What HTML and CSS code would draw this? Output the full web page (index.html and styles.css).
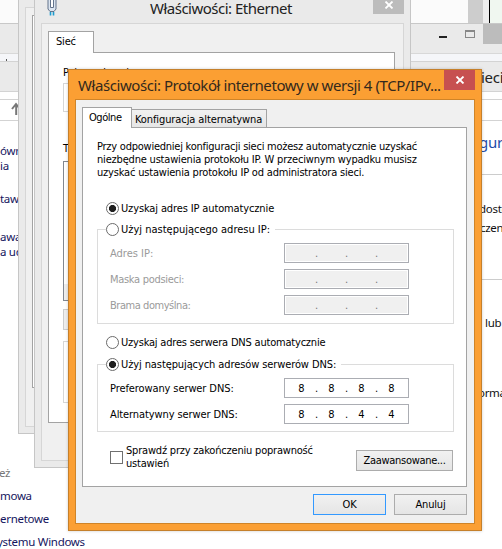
FILE: index.html
```html
<!DOCTYPE html>
<html lang="pl">
<head>
<meta charset="utf-8">
<title>Właściwości: Protokół internetowy w wersji 4</title>
<link rel="stylesheet" href="styles.css">
</head>
<body>
<div class="desktop">
  <div class="explorer">
    <div class="strip"><i class="scroll"></i><i class="edge"></i><i class="green"></i></div>
    <div class="caption"><i class="min"></i><i class="max"></i><i class="cls"></i></div>
    <div class="menu"></div>
    <div class="address"><span class="addr-text">ieci</span></div>
    <div class="gap-row"></div>
    <div class="search-row"></div>
    <i class="tick"></i>
    <svg class="up" viewBox="0 0 8 14"><path d="M1 7L5 2L9 7M5.2 2V13" fill="none" stroke="#777" stroke-width="2"/></svg>
    <span class="bit link b2">ówn</span><span class="bit link b3">ia</span><span class="bit link b4">taw</span>
    <span class="bit link b5">awa</span><span class="bit link b6">a ud</span>
    <span class="bit grey b7">eż</span><span class="bit link b8">mowa</span><span class="bit link b9">ernetowe</span><span class="bit link b10">ystemu Windows</span>
    <span class="bit head b11">gura</span><span class="bit b12">dostę</span><span class="bit b13">czeni</span><span class="bit b14">lub</span><span class="bit b15">orma</span>
    <i class="rule r1"></i><i class="rule r2"></i>
  </div>

  <div class="win back"><div class="client"><div class="page"></div></div></div>

  <div class="win ether">
    <div class="ether-title">
      <svg class="plug" viewBox="0 0 10 17"><path d="M1 0V9L3 11.5H7L9 9V0" fill="#dbe4ef" stroke="#63738b"/><path d="M3.5 0V7.5H6.5V0" fill="#fff" stroke="#63738b"/><path d="M3.5 12V15.5M6.5 12V15.5" stroke="#1d9dd0" stroke-width="1.6"/></svg>
      <span class="title t-ether">Właściwości: Ethernet</span>
      <span class="ether-close"><svg viewBox="0 0 10 8"><path d="M1.5 .5L8.5 7.5M8.5 .5L1.5 7.5" stroke="#fff" stroke-width="1.8"/></svg></span>
    </div>
    <div class="client">
      <div class="tab">Sieć</div>
      <div class="page">
        <span>Połącz używając:</span>
        <i class="box-a"></i>
        <span class="list-label">T</span>
        <i class="box-b"></i><i class="box-c"></i><i class="box-d"></i>
      </div>
    </div>
  </div>

  <div class="dialog">
    <div class="titlebar">
      <span class="title t-main">Właściwości: Protokół internetowy w wersji 4 (TCP/IPv...</span>
      <span class="close"><svg viewBox="0 0 10 8"><path d="M1.5 .5L8.5 7.5M8.5 .5L1.5 7.5" stroke="#fff" stroke-width="1.8"/></svg></span>
    </div>
    <div class="body">
      <div class="tabs"><div class="tab on"><span class="w-og">Ogólne</span></div><div class="tab off"><span class="w-alt">Konfiguracja alternatywna</span></div></div>
      <div class="panel">
        <p class="intro"><span class="w-i1">Przy odpowiedniej konfiguracji sieci możesz automatycznie uzyskać</span><br><span class="w-i2">niezbędne ustawienia protokołu IP. W przeciwnym wypadku musisz</span><br><span class="w-i3">uzyskać ustawienia protokołu IP od administratora sieci.</span></p>
        <div class="opt o1"><i class="radio sel"></i><span class="w-r1">Uzyskaj adres IP automatycznie</span></div>
        <fieldset class="g1">
          <legend class="opt"><i class="radio"></i><span class="w-r2">Użyj następującego adresu IP:</span></legend>
          <div class="row dis"><span class="w-l1">Adres IP:</span><div class="ip"><b></b><u>.</u><b></b><u>.</u><b></b><u>.</u><b></b></div></div>
          <div class="row dis"><span class="w-l2">Maska podsieci:</span><div class="ip"><b></b><u>.</u><b></b><u>.</u><b></b><u>.</u><b></b></div></div>
          <div class="row dis"><span class="w-l3">Brama domyślna:</span><div class="ip"><b></b><u>.</u><b></b><u>.</u><b></b><u>.</u><b></b></div></div>
        </fieldset>
        <div class="opt o3"><i class="radio"></i><span class="w-r3">Uzyskaj adres serwera DNS automatycznie</span></div>
        <fieldset class="g2">
          <legend class="opt"><i class="radio sel"></i><span class="w-r4">Użyj następujących adresów serwerów DNS:</span></legend>
          <div class="row"><span class="w-l4">Preferowany serwer DNS:</span><div class="ip"><b>8</b><u>.</u><b>8</b><u>.</u><b>8</b><u>.</u><b>8</b></div></div>
          <div class="row"><span class="w-l5">Alternatywny serwer DNS:</span><div class="ip"><b>8</b><u>.</u><b>8</b><u>.</u><b>4</b><u>.</u><b>4</b></div></div>
        </fieldset>
        <div class="bottom">
          <i class="check"></i>
          <span class="check-label"><span class="w-c1">Sprawdź przy zakończeniu poprawność</span><br><span class="w-c2">ustawień</span></span>
          <span class="btn adv"><span class="w-adv">Zaawansowane...</span></span>
        </div>
      </div>
      <div class="actions"><span class="btn ok">OK</span><span class="btn">Anuluj</span></div>
    </div>
  </div>
</div>
</body>
</html>
```
FILE: styles.css
```css
* { box-sizing: border-box; }
body { margin: 0; background: #fff; font: 11px/13px "DejaVu Sans Condensed", "Noto Sans", sans-serif; color: #000; letter-spacing: -0.2px; white-space: nowrap; }
i, b, u { font-style: normal; font-weight: normal; text-decoration: none; }
svg { display: block; }
.desktop { position: relative; width: 502px; height: 549px; overflow: hidden; }

/* explorer window in the background */
.explorer { height: 549px; background: #fff; }
.strip { height: 23px; background: #fbfbfb; display: flex; padding-left: 468px; }
.scroll { width: 15px; background: #cdcdcd; }
.edge { width: 7px; background: #eee; border-right: 1px solid #000; }
.green { flex: 1; background: #f0f7f0; }
.caption { height: 31px; background: #eaeaea; border-top: 1px solid #c8c8c8; border-bottom: 1px solid #d8d8d8; display: flex; padding-left: 439px; }
.min { width: 8px; height: 2px; margin-top: 12px; background: #222; }
.max { width: 10px; height: 8px; margin: 6px 8px 0 18px; border: 1px solid #888; border-top-width: 2px; }
.cls { flex: 1; height: 20px; background: #bcbcbc; }
.menu { height: 7px; background: #f5f6f9; }
.address { height: 31px; background: #eaeaea; border: solid #d3d3d3; border-width: 1px 0; padding: 6px 0 0 481px; }
.addr-text { font: 15px/18px "Noto Sans", sans-serif; color: #222; letter-spacing: -0.3px; }
.gap-row { height: 8px; border-bottom: 1px solid #d3d3d3; }
.search-row { height: 21px; border-bottom: 1px solid #d3d3d3; }
.bit { position: absolute; font: 11.5px/16px "Noto Sans", sans-serif; letter-spacing: -0.3px; color: #111; left: 0; }
.link { color: #15155e; }
.grey { color: #777; }
.up { position: absolute; left: 11px; top: 102px; width: 8px; height: 14px; }
.tick { position: absolute; left: 6px; top: 59px; width: 1px; height: 2px; background: #555; }
.b2 { top: 143px; }
.b3 { top: 158px; }
.b4 { top: 191px; }
.b5 { top: 229px; }
.b6 { top: 244px; }
.b7 { top: 465px; left: -1px; }
.b8 { top: 488px; }
.b9 { top: 511px; }
.b10 { top: 534px; left: -3px; }
.head { font-size: 15px; color: #1f4da8; }
.b11 { left: 479px; top: 134px; }
.b12 { left: 479px; top: 201px; }
.b13 { left: 480px; top: 220px; }
.b14 { left: 485px; top: 315px; }
.b15 { left: 478px; top: 385px; }
.rule { position: absolute; left: 482px; right: 0; height: 1px; background: #ccc; }
.r1 { top: 174px; }
.r2 { top: 279px; }

/* adapter windows */
.win { position: absolute; background: #eaeaea; border: 1px solid #c6c6c6; display: flex; flex-direction: column; }
.win .client { flex: 1; border: 1px solid #d6d6d6; background: #f0f0f0; display: flex; flex-direction: column; }
.win .page { flex: 1; background: #fff; border: 1px solid #a3a3a3; }
.back { left: 18px; top: -10px; width: 100px; height: 444px; padding: 16px 6px 6px; }
.back .page { margin: 7px 6px 38px; }
.ether { left: 34px; top: -10px; width: 377px; height: 478px; padding: 0 6px 6px; border-color: #c6c6c6; }
.ether-title { height: 32px; display: flex; padding-top: 9px; }
.plug { width: 10px; height: 17px; margin-left: 6px; }
.t-ether { margin: -1px auto 0 93px; letter-spacing: -0.5px !important; }
.title { font: 15px/18px "Noto Sans", sans-serif; color: #222; letter-spacing: -0.43px; }
.ether-close { width: 31px; height: 14px; background: #bcbcbc; display: flex; justify-content: center; padding-top: 1px; }
.ether-close svg, .close svg { width: 10px; height: 8px; }
.ether .client { padding: 7px 8px 37px 6px; }
.ether .tab { width: 46px; height: 22px; background: #fff; border: 1px solid #a3a3a3; border-bottom: 0; padding: 3px 7px; margin-bottom: -1px; z-index: 1; }
.ether .page { padding: 13px 14px; display: flex; flex-direction: column; }
.box-a { height: 29px; border: 1px solid #d6d6d6; margin: 4px 0 30px; }
.box-b { height: 140px; border: 1px solid #828790; margin: 6px 0 8px; background: linear-gradient(#fff 122px, #eee 122px); }
.box-c { height: 21px; border: 1px solid #ccc; background: #eee; }
.box-d { height: 62px; border: 1px solid #d6d6d6; margin-top: 11px; }

/* protocol dialog */
.dialog { position: absolute; left: 68px; top: 69px; width: 414px; height: 462px; background: #fb9f33; border: 1px solid #c5802b; padding: 0 6px 6px; box-shadow: 0 0 3px rgba(0,0,0,.2); display: flex; flex-direction: column; }
.titlebar { height: 29px; display: flex; justify-content: space-between; padding-left: 3px; }
.t-main { line-height: 30px; color: #33291d; }
.close { width: 31px; height: 20px; background: #c75050; display: flex; justify-content: center; padding-top: 6px; }
.body { flex: 1; border: 1px solid #cf8428; background: #f0f0f0; padding: 7px 7px 7px 6px; display: flex; flex-direction: column; }
.tabs { display: flex; align-items: flex-end; height: 20px; }
.tabs .tab { border: 1px solid #a3a3a3; border-bottom: 0; }
.on { width: 50px; height: 21px; background: #fff; margin-bottom: -1px; padding: 3px 0 0 6px; z-index: 1; }
.off { width: 135px; height: 18px; background: linear-gradient(#f1f1f1, #e6e6e6); border-left: 0 !important; padding: 3px 0 0 3px; }
.panel { width: 385px; height: 360px; background: #fff; border: 1px solid #a3a3a3; padding: 12px 12px 0 14px; }
.intro { margin: 0 0 22px; }
.opt { display: flex; align-items: center; gap: 2px; height: 14px; }
.radio { width: 13px; height: 13px; border: 1px solid #6b6b6b; border-radius: 50%; background: #fff; flex: none; }
.sel { background: radial-gradient(circle, #1f1f1f 3.2px, #fff 3.9px); }
.o1 { margin-left: 9px; height: 15px; margin-bottom: 6px; }
fieldset { margin: 0; border: 1px solid #dcdcdc; width: 357px; padding: 0 0 0 12px; min-width: 0; }
legend { padding: 0 5px 0 0; margin-left: -4px; }
.g1 { height: 102px; }
.g2 { height: 75px; }
.row { display: flex; justify-content: space-between; align-items: center; height: 20px; margin-bottom: 6px; padding-right: 44px; }
.g1 .row:nth-of-type(1), .g2 .row:nth-of-type(1) { margin-top: 7px; }
.dis { color: #9a9a9a; }
.ip { width: 125px; height: 20px; border: 1px solid #abadb3; display: flex; padding: 3px 0 0 10.5px; letter-spacing: 0; }
.dis .ip { background: #f0f0f0; box-shadow: inset 0 0 0 1px #fff; color: #777; }
.ip b { width: 12px; text-align: center; }
.ip u { width: 18px; text-align: center; }
.o3 { margin: 11px 0 8px 9px; }
.bottom { display: flex; padding-left: 13px; margin-top: 12px; }
.check { width: 13px; height: 13px; border: 1px solid #707070; margin: 7px 3px 0 0; background: #fff; }
.btn { width: 73px; height: 21px; border: 1px solid #acacac; background: linear-gradient(#f1f1f1, #e5e5e5); text-align: center; line-height: 20px; }
.adv { width: 97px; margin: 6px 1px 0 auto; }
.ok { border-color: #3399ff; }
.actions { display: flex; justify-content: flex-end; gap: 8px; margin-top: 7px; }

/* tracking tuned per label */
.w-og, .w-l3 { letter-spacing: -0.45px; }
.w-l2, .w-adv { letter-spacing: -0.3px; }
.w-i1 { letter-spacing: -0.24px; }
.w-i2, .w-i3 { letter-spacing: -0.19px; }
.w-r1 { letter-spacing: -0.13px; }
.w-r2 { letter-spacing: 0; }
.w-r4, .w-alt, .w-l4, .w-l5 { letter-spacing: -0.1px; }
.w-l1 { letter-spacing: 0; }
```
